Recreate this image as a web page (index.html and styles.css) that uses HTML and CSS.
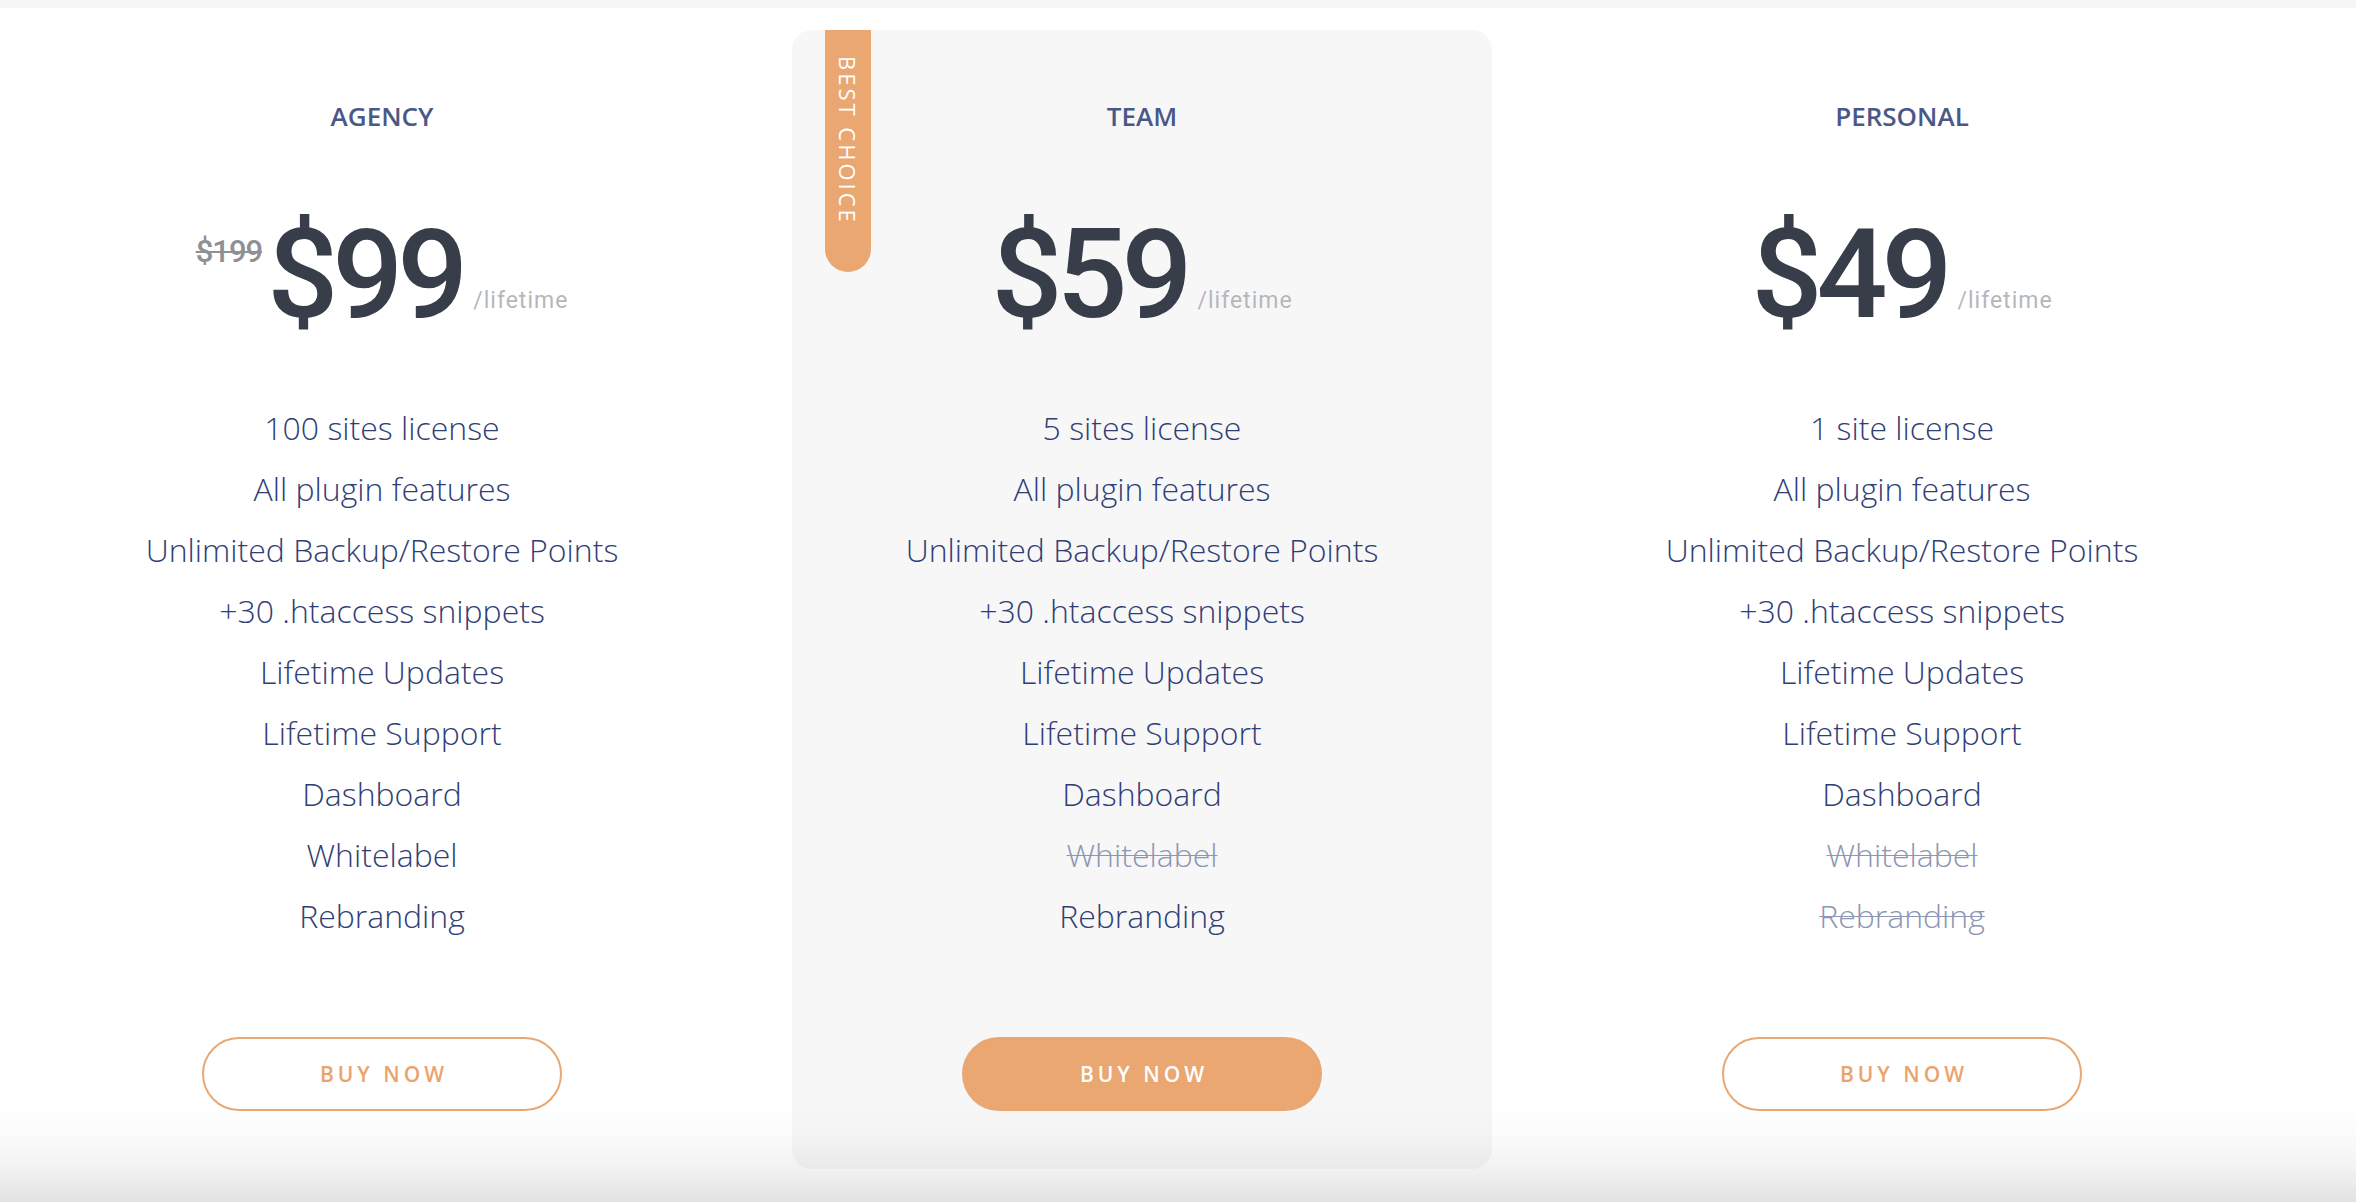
FILE: index.html
```html
<!DOCTYPE html>
<html lang="en">
<head>
<meta charset="utf-8">
<title>Pricing</title>
<link rel="stylesheet" href="styles.css">
</head>
<body>
<div class="topbar"></div>
<main class="plans">
  <section class="plan">
    <h2 class="plan-title">AGENCY</h2>
    <div class="price-row">
      <span class="old-price">$199</span>
      <span class="amount">$99</span>
      <span class="per">/lifetime</span>
    </div>
    <ul class="features">
      <li>100 sites license</li>
      <li>All plugin features</li>
      <li>Unlimited Backup/Restore Points</li>
      <li>+30 .htaccess snippets</li>
      <li>Lifetime Updates</li>
      <li>Lifetime Support</li>
      <li>Dashboard</li>
      <li>Whitelabel</li>
      <li>Rebranding</li>
    </ul>
    <a class="btn btn-outline" href="#">BUY NOW</a>
  </section>

  <section class="plan plan-featured">
    <div class="ribbon"><span class="ribbon-text">BEST CHOICE</span></div>
    <h2 class="plan-title">TEAM</h2>
    <div class="price-row">
      <span class="amount">$59</span>
      <span class="per">/lifetime</span>
    </div>
    <ul class="features">
      <li>5 sites license</li>
      <li>All plugin features</li>
      <li>Unlimited Backup/Restore Points</li>
      <li>+30 .htaccess snippets</li>
      <li>Lifetime Updates</li>
      <li>Lifetime Support</li>
      <li>Dashboard</li>
      <li class="off">Whitelabel</li>
      <li>Rebranding</li>
    </ul>
    <a class="btn btn-solid" href="#">BUY NOW</a>
  </section>

  <section class="plan">
    <h2 class="plan-title">PERSONAL</h2>
    <div class="price-row">
      <span class="amount">$49</span>
      <span class="per">/lifetime</span>
    </div>
    <ul class="features">
      <li>1 site license</li>
      <li>All plugin features</li>
      <li>Unlimited Backup/Restore Points</li>
      <li>+30 .htaccess snippets</li>
      <li>Lifetime Updates</li>
      <li>Lifetime Support</li>
      <li>Dashboard</li>
      <li class="off">Whitelabel</li>
      <li class="off">Rebranding</li>
    </ul>
    <a class="btn btn-outline" href="#">BUY NOW</a>
  </section>
</main>
</body>
</html>
```

FILE: styles.css
```css
html, body {
  margin: 0;
  padding: 0;
}

body {
  background: #ffffff;
  font-family: "Open Sans", "Noto Sans", sans-serif;
  min-height: 1202px;
  overflow: hidden;
}

body::after {
  content: "";
  position: fixed;
  left: 0;
  right: 0;
  bottom: 0;
  height: 96px;
  pointer-events: none;
  background: linear-gradient(to bottom,
    rgba(0, 0, 0, 0) 0%,
    rgba(0, 0, 0, 0.02) 35%,
    rgba(0, 0, 0, 0.05) 64%,
    rgba(0, 0, 0, 0.08) 80%,
    rgba(0, 0, 0, 0.115) 100%);
}

.topbar {
  height: 8px;
  background: #f6f6f7;
}

.plans {
  display: grid;
  grid-template-columns: repeat(3, 700px);
  column-gap: 60px;
  padding-left: 32px;
  margin-top: 22px;
}

.plan {
  position: relative;
  display: flex;
  flex-direction: column;
  align-items: center;
  text-align: center;
  padding: 68px 0 58px;
  border-radius: 20px;
}

.plan-featured {
  background: #f7f7f8;
}

.ribbon {
  position: absolute;
  top: 0;
  left: 33px;
  width: 46px;
  height: 242px;
  background: #eaa772;
  border-radius: 0 0 23px 23px;
  display: flex;
  justify-content: center;
  align-items: flex-start;
  padding-top: 26px;
  box-sizing: border-box;
  text-align: left;
}

.ribbon-text {
  writing-mode: vertical-rl;
  text-align: left;
  color: #ffffff;
  font-family: "Open Sans", sans-serif;
  font-weight: 400;
  font-size: 22px;
  letter-spacing: 3px;
  line-height: 1;
}

.plan-title {
  margin: 0;
  font-family: "Open Sans", sans-serif;
  font-weight: 600;
  font-size: 26px;
  line-height: 36px;
  color: #4a5888;
}

.price-row {
  margin-top: 78px;
  display: flex;
  justify-content: center;
  align-items: flex-start;
  height: 125px;
}

.old-price {
  font-family: Roboto, "Liberation Sans", sans-serif;
  font-weight: 500;
  font-size: 31px;
  line-height: 1;
  letter-spacing: -1px;
  color: #8e9096;
  text-decoration: line-through;
  text-decoration-thickness: 2px;
  margin-top: 24px;
  margin-right: 5px;
}

.amount {
  font-family: Roboto, "Liberation Sans", sans-serif;
  font-weight: 500;
  font-size: 125px;
  line-height: 1;
  letter-spacing: -6px;
  color: #373d49;
}

.per {
  align-self: flex-end;
  margin-bottom: 25px;
  margin-left: 11px;
  font-family: Roboto, "Liberation Sans", sans-serif;
  font-weight: 400;
  font-size: 23px;
  line-height: 1;
  letter-spacing: 1px;
  color: #b5b7bc;
}

.features {
  list-style: none;
  margin: 60px 0 0;
  padding: 0;
  font-family: "Open Sans", sans-serif;
  font-weight: 300;
  font-size: 32px;
  line-height: 61px;
  color: #303e76;
}

.features .off {
  color: #8d96b3;
  text-decoration: line-through;
  text-decoration-thickness: 1px;
}

.btn {
  margin-top: 91px;
  width: 360px;
  height: 74px;
  box-sizing: border-box;
  border-radius: 37px;
  display: flex;
  align-items: center;
  justify-content: center;
  padding-left: 4px;
  font-family: "Open Sans", sans-serif;
  font-weight: 600;
  font-size: 21px;
  letter-spacing: 4px;
  text-decoration: none;
}

.btn-outline {
  border: 2px solid #e9a771;
  color: #e9a46d;
  background: transparent;
}

.btn-solid {
  border: 2px solid #eaa772;
  background: #eaa772;
  color: #ffffff;
}
```
